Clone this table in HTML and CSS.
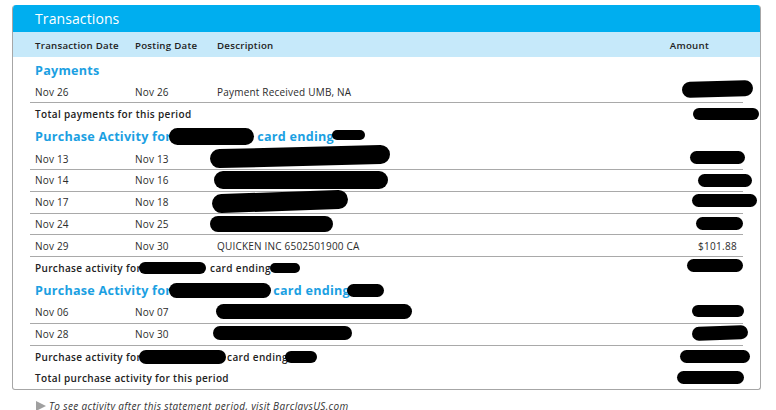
FILE: index.html
```html
<!DOCTYPE html>
<html>
<head>
<meta charset="utf-8">
<link rel="stylesheet" href="styles.css">
</head>
<body>
<div class="panel">
  <div class="title">Transactions</div>
  <div class="colhead">
    <span class="c1">Transaction Date</span>
    <span class="c2">Posting Date</span>
    <span class="c3">Description</span>
    <span class="c4">Amount</span>
  </div>
  <div class="body">
    <div class="heading">Payments</div>
    <div class="row sep">
      <span class="c1">Nov 26</span><span class="c2">Nov 26</span>
      <span class="c3">Payment Received UMB, NA</span>
      <span class="c4"><i class="blob a-pay"></i></span>
    </div>
    <div class="row total">
      <span class="c1 wide">Total payments for this period</span>
      <span class="c4"><i class="blob a-paytot"></i></span>
    </div>

    <div class="heading tall">Purchase Activity for<i class="blob h1-name"></i>card ending<i class="blob h1-end"></i></div>
    <div class="row sep">
      <span class="c1">Nov 13</span><span class="c2">Nov 13</span>
      <span class="c3"><i class="blob d13"></i></span>
      <span class="c4"><i class="blob a13"></i></span>
    </div>
    <div class="row sep">
      <span class="c1">Nov 14</span><span class="c2">Nov 16</span>
      <span class="c3"><i class="blob d14"></i></span>
      <span class="c4"><i class="blob a14"></i></span>
    </div>
    <div class="row sep">
      <span class="c1">Nov 17</span><span class="c2">Nov 18</span>
      <span class="c3"><i class="blob d17"></i></span>
      <span class="c4"><i class="blob a17"></i></span>
    </div>
    <div class="row sep">
      <span class="c1">Nov 24</span><span class="c2">Nov 25</span>
      <span class="c3"><i class="blob d24"></i></span>
      <span class="c4"><i class="blob a24"></i></span>
    </div>
    <div class="row sep">
      <span class="c1">Nov 29</span><span class="c2">Nov 30</span>
      <span class="c3">QUICKEN INC 6502501900 CA</span>
      <span class="c4">$101.88</span>
    </div>
    <div class="row total">
      <span class="c1 wide">Purchase activity for<i class="blob t1-name"></i>card ending<i class="blob t1-end"></i></span>
      <span class="c4"><i class="blob at1"></i></span>
    </div>

    <div class="heading tall">Purchase Activity for<i class="blob h2-name"></i>card ending<i class="blob h2-end"></i></div>
    <div class="row sep">
      <span class="c1">Nov 06</span><span class="c2">Nov 07</span>
      <span class="c3"><i class="blob d06"></i></span>
      <span class="c4"><i class="blob a06"></i></span>
    </div>
    <div class="row sep">
      <span class="c1">Nov 28</span><span class="c2">Nov 30</span>
      <span class="c3"><i class="blob d28"></i></span>
      <span class="c4"><i class="blob a28"></i></span>
    </div>
    <div class="row total">
      <span class="c1 wide">Purchase activity for<i class="blob t2-name"></i>card ending<i class="blob t2-end"></i></span>
      <span class="c4"><i class="blob at2"></i></span>
    </div>
    <div class="row total last">
      <span class="c1 wide">Total purchase activity for this period</span>
      <span class="c4"><i class="blob atot"></i></span>
    </div>
  </div>
</div>
<div class="footer"><span class="tri"></span>To see activity after this statement period, visit BarclaysUS.com</div>
</body>
</html>
```
FILE: styles.css
```css
html, body {
  margin: 0;
  padding: 0;
  background: #ffffff;
}
body {
  font-family: "Open Sans", "DejaVu Sans", sans-serif;
  color: #2b2b2b;
  font-size: 10px;
  width: 776px;
  height: 410px;
  overflow: hidden;
}
.panel {
  margin: 5px 0 0 12px;
  width: 749px;
  box-sizing: border-box;
  border: 1px solid #a6a6a6;
  border-top: none;
  border-radius: 4px 4px 3px 3px;
  overflow: hidden;
}
.title {
  background: #00aeef;
  color: #ffffff;
  height: 27px;
  box-sizing: border-box;
  padding: 4px 0 0 22px;
  font-size: 14px;
  font-weight: 500;
  letter-spacing: 0.1px;
}
.colhead {
  background: #c6e9fa;
  height: 25px;
  display: flex;
  align-items: center;
  padding: 1px 0 0 22px;
  box-sizing: border-box;
  font-weight: 600;
  color: #222;
  letter-spacing: 0.25px;
  font-size: 9.7px;
}
.colhead .c1 { width: 100px; }
.colhead .c2 { width: 82px; }
.colhead .c3 { flex: 1; }
.colhead .c4 { padding-right: 51px; }
.body {
  margin: 0 17px;
  padding-top: 1.5px;
}
.heading {
  height: 23px;
  display: flex;
  align-items: center;
  padding-left: 5px;
  color: #1ba0e2;
  font-weight: 700;
  font-size: 12.6px;
  letter-spacing: 0.25px;
}
.row {
  height: 21.75px;
  box-sizing: border-box;
  display: flex;
  align-items: center;
  padding-left: 5px;
  letter-spacing: 0.2px;
}
.row.sep { border-bottom: 1px solid #a9a9a9; }
.row.total {
  height: 22px;
  font-weight: 600;
  color: #222;
  letter-spacing: 0.35px;
}
.row.last { height: 21px; }
.row .c1 { width: 100px; flex: none; }
.row .c1.wide { width: auto; flex: 1; display: flex; align-items: center; }
.row .c2 { width: 82px; flex: none; }
.row .c3 { flex: 1; display: flex; align-items: center; }
.row .c4 {
  width: 120px;
  padding-right: 6px;
  display: flex;
  justify-content: flex-end;
  align-items: center;
  letter-spacing: 0.3px;
}
.blob {
  display: inline-block;
  background: #000;
  border-radius: 999px;
  flex: none;
}
/* amounts */
.a-pay   { width: 71px; height: 16px; margin-right: -16px; margin-top: -6px; transform: rotate(-1.5deg); }
.a-paytot{ width: 66px; height: 12px; margin-right: -22px; }
.a13 { width: 55px; height: 13px; margin-right: -8px; margin-top: -3px; }
.a14 { width: 54px; height: 13px; margin-right: -15px; }
.a17 { width: 65px; height: 13px; margin-right: -20px; margin-top: -3px; }
.a24 { width: 47px; height: 13px; margin-right: -6px; }
.at1 { width: 56px; height: 13px; margin-right: -6px; margin-top: -6px; }
.a06 { width: 52px; height: 12px; margin-right: -7px; margin-top: -2px; }
.a28 { width: 56px; height: 14px; margin-right: -11px; margin-top: -2px; transform: rotate(-2deg); }
.at2 { width: 70px; height: 13px; margin-right: -13px; }
.atot{ width: 67px; height: 13px; margin-right: -7px; margin-top: -2px; }
/* descriptions */
.d13 { width: 180px; height: 19px; margin-left: -7px; margin-top: -5px; transform: rotate(-1.5deg); }
.d14 { width: 174px; height: 18px; margin-left: -3px; }
.d17 { width: 136px; height: 19px; margin-left: -5px; margin-top: -2px; transform: rotate(-2deg); }
.d24 { width: 123px; height: 16px; margin-left: -7px; }
.d06 { width: 196px; height: 15px; margin-left: -1px; margin-top: -2px; }
.d28 { width: 139px; height: 14px; margin-left: -4px; margin-top: -2px; }
/* headings */
.h1-name { width: 85px; height: 17px; margin: 0 3px 0 -2px; }
.h1-end  { width: 33px; height: 10px; margin: -4px 0 0 -2px; }
.h2-name { width: 102px; height: 15px; margin: 0 2px 0 -2px; }
.h2-end  { width: 37px; height: 13px; margin: 0 0 0 -3px; }
.t1-name { width: 67px; height: 12px; margin: 0 4px 0 -2px; }
.t1-end  { width: 30px; height: 10px; margin: 0 0 0 -1px; }
.t2-name { width: 87px; height: 14px; margin: 0 1px 0 -2px; }
.t2-end  { width: 32px; height: 12px; margin: 0 0 0 -3px; }
.footer {
  margin: 9px 0 0 36px;
  font-style: italic;
  font-size: 10px;
  color: #333;
  letter-spacing: 0.35px;
  display: flex;
  align-items: center;
}
.tri {
  display: inline-block;
  width: 0;
  height: 0;
  border-top: 5px solid transparent;
  border-bottom: 5px solid transparent;
  border-left: 10px solid #a0a0a0;
  margin-right: 3px;
}
```
